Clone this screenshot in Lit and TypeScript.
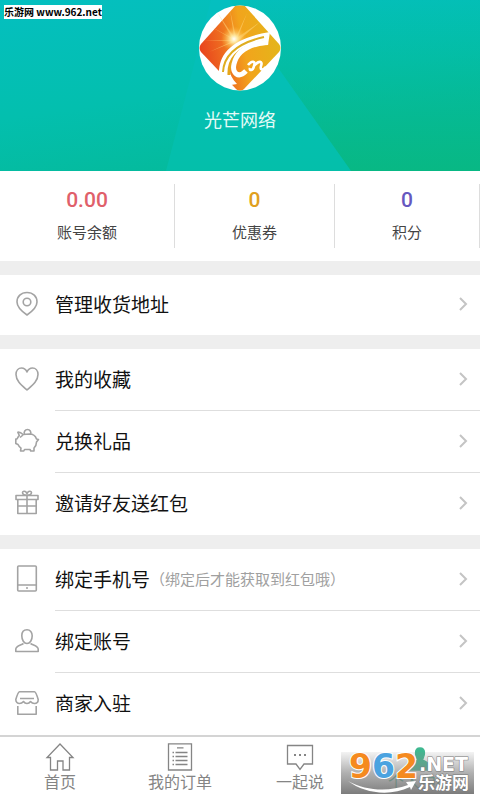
import { LitElement, html, css, svg, TemplateResult } from "lit";
import { customElement, property } from "lit/decorators.js";

const icons: Record<string, TemplateResult> = {
  pin: svg`<path d="M12 0.500C6 .500 2 4.500 2 10C2 15.500 7 19.500 12 23C17 19.500 22 15.500 22 10C22 4.500 18 .500 12 .500Z"/><circle cx="12" cy="10" r="3.800"/>`,
  heart: svg`<path d="M12 23C7 18.500 1 14 1 7.500C1 3.500 3.500 1 6.500 1C9 1 11 2.500 12 5C13 2.500 15 1 17.500 1C20.500 1 23 3.500 23 7.500C23 14 17 18.500 12 23Z"/>`,
  pig: svg`<path d="M8 5.500C6.500 4 4.500 3 2.800 3.200L4.300 6.500C3.200 7.700 2.500 9 2 10H.8V14.500L3 15.500C3.800 17.300 4.800 18.300 6 19.200L5.500 22H8.800L9.500 20.500H15L15.800 22H19V19C20.500 17.500 21.500 15.500 21.500 13L23.500 10.500L21.500 10C20.500 7 17.500 5 14.500 5Z"/><path d="M9.500 5.200A3.300 3.300 0 1 1 15.500 5.200M5 8.500L8 6"/>`,
  gift: svg`<path d="M1 4.500H23V8.500H1ZM2.800 8.500V22.500H21.200V8.500M12 4.500V22.500M2.800 15H21.200"/><path d="M12 4.200C9 4.200 7.500 3 7.500 1.500S10 -.2 11 1L12 2.500L13 1C14 -.2 16.500 0 16.500 1.500S15 4.200 12 4.200Z"/>`,
  phone: svg`<rect x="2.700" y="-1" width="18.600" height="25" rx="1"/><path d="M2.700 18H21.300M11 21H13"/>`,
  user: svg`<path d="M12 .8C8.800 .8 6.800 3.200 6.800 6.800C6.800 11 9 14.500 12 14.500S17.200 11 17.200 6.800C17.200 3.200 15.200 .8 12 .8Z"/><path d="M8.500 14.500C5 16.500 1 17 .8 20V22.500H23.200V20C23 17 19 16.500 15.500 14.500"/>`,
  shop: svg`<path d="M4.500 .8H19.500C20.800 .8 21.500 3 23.200 8.500C23.200 11 21.500 12.500 19.500 12.500C17.800 12.500 16.500 11.700 15.500 10.500C14.500 12 13.300 12.500 12 12.500S9.500 12 8.500 10.500C7.500 11.700 6.200 12.500 4.500 12.500C2.500 12.500 .8 11 .8 8.500C2.500 3 3.200 .8 4.500 .8ZM5 7.500H19"/><path d="M2.800 15V23.200H21.200V15"/>`,
  home: svg`<path d="M14 2L27 15.500H23.500V28H17V19H11.500V28H4.500V15.500H1Z"/>`,
  orders: svg`<path d="M2.500 1.800H25.500V28H2.500ZM11 5.800H17.500M9.500 10.500H21.500M9.500 14.500H21.500M9.500 18.500H21.500M9.500 22.500H21.500M6.500 10.500H8M6.500 14.500H8M6.500 18.500H8M6.500 22.500H8"/>`,
  chat: svg`<path d="M1.500 3.500H26.500V22H18L14 27.500L10 22H1.500Z"/><path d="M8 13H10M13 13H15M18 13H20" stroke-width="2"/>`,
  me: svg`<path fill="currentColor" d="M14 6C11 6 9.500 8 9.500 11C9.500 14 11 16 11.300 18C8 20 4 21 3.500 27V28H24.500V27C24 21 20 20 16.700 18C17 16 18.500 14 18.500 11C18.500 8 17 6 14 6Z"/>`,
};

@customElement("menu-row")
class MenuRow extends LitElement {
  @property() icon = "";
  @property() label = "";
  @property() hint = "";
  static styles = css`
    :host { display: block; background: #fff; }
    .row { display: flex; align-items: center; height: var(--row-height, 62px); padding-left: 15px; color: #111; text-decoration: none; }
    .icon { width: 24px; height: 24px; flex: none; margin-bottom: 2px; fill: none; stroke: #a3a3a3; stroke-width: 1.6; stroke-linejoin: round; overflow: visible; }
    .body { display: flex; align-items: center; flex: 1; align-self: stretch; margin-left: 16px; padding: 0 12px 2px 0; box-sizing: border-box; border-bottom: 1px solid var(--line, #dedede); }
    .label { font-size: 19px; line-height: 28px; white-space: nowrap; }
    .hint { font-size: 15px; line-height: 28px; color: #a0a0a0; white-space: nowrap; }
    .arrow { width: 10px; height: 16px; margin-left: auto; fill: none; stroke: #c4c4c4; stroke-width: 2; }
  `;
  render() {
    return html`<a class="row" href="#">
      <svg class="icon" viewBox="0 0 24 24" aria-hidden="true">${icons[this.icon]}</svg>
      <span class="body">
        <span class="label">${this.label}</span>
        ${this.hint ? html`<span class="hint">${this.hint}</span>` : ""}
        <svg class="arrow" viewBox="0 0 10 16" aria-hidden="true"><path d="M2 2L8 8L2 14" /></svg>
      </span>
    </a>`;
  }
}

@customElement("app-root")
class AppRoot extends LitElement {
  static styles = css`
    :host { display: flex; flex-direction: column; min-height: 100vh; position: relative; background: #eee; font-family: "Noto Sans CJK SC", sans-serif; }
    .header { position: relative; display: flex; flex-direction: column; align-items: center; box-sizing: border-box; height: 171px; padding-top: 5px; background: linear-gradient(170deg, #04bfc0 10%, #03bfae 45%, #06b888 95%); background: linear-gradient(172deg, #04bfc0, #03bfae 50%, #05b893); }
    .beam { position: absolute; inset: 0; width: 100%; height: 100%; }
    .avatar { position: relative; width: 82px; height: 86px; }
    .name { position: relative; margin: 14px 0 0; font-size: 18px; line-height: 28px; font-weight: 400; color: #e4fbf7; }
    .site { position: absolute; left: 4px; top: 5px; width: 98px; height: 14px; background: #fff; color: #000; font: bold 10px/14px "Noto Sans CJK SC", sans-serif; text-align: center; white-space: nowrap; }
    .stats { display: grid; grid-template-columns: 35fr 32fr 29fr; padding: 13px 0; background: #fff; }
    .stat { display: flex; flex-direction: column; align-items: center; height: 64px; border-right: 1px solid #ddd; text-decoration: none; }
    .value { font: 500 21px/32px Roboto, sans-serif; }
    .caption { font-size: 15px; line-height: 32px; color: #444; }
    .red { color: #e0606a; }
    .amber { color: #e0a020; }
    .violet { color: #6658c0; }
    .group { margin-top: 14px; background: #fff; }
    .single { --row-height: 60px; }
    .last { --line: transparent; }
    .tabs { display: grid; grid-template-columns: repeat(4, 1fr); margin-top: auto; background: #fff; border-top: 2px solid #d4d4d4; height: 63px; }
    .tab { display: flex; flex-direction: column; align-items: center; padding-top: 5px; color: #858585; text-decoration: none; font-size: 16px; line-height: 22px; }
    .tab svg { width: 28px; height: 28px; fill: none; stroke: currentColor; stroke-width: 1.3; overflow: visible; }
    .active { color: #3fb890; }
    .mark { position: absolute; right: 6px; bottom: 6px; width: 133px; height: 42px; }
    .digits { font: bold 33px "DejaVu Sans", sans-serif; stroke: #fff; stroke-width: 2; paint-order: stroke; }
    .net { font: bold 19px "DejaVu Sans", sans-serif; fill: #fff; stroke: #777; stroke-width: 1; paint-order: stroke; }
    .cn { font: bold 17px "Noto Sans CJK SC", sans-serif; fill: #fff; stroke: #777; stroke-width: 1; paint-order: stroke; }
  `;

  tab(icon: string, label: string, active = false) {
    return html`<a class="tab ${active ? "active" : ""}" href="#"><svg viewBox="0 0 28 28" aria-hidden="true">${icons[icon]}</svg><span>${label}</span></a>`;
  }

  stat(value: string, caption: string, tone: string) {
    return html`<a class="stat" href="#"><span class="value ${tone}">${value}</span><span class="caption">${caption}</span></a>`;
  }

  render() {
    return html`
      <header class="header">
        <svg class="beam" viewBox="0 0 480 171" preserveAspectRatio="none" aria-hidden="true">
          <defs>
            <linearGradient id="beam" x2="0" y2="1"><stop stop-color="#04bfc0" /><stop offset="1" stop-color="#04bfaa" /></linearGradient>
            <linearGradient id="side" x2="0" y2="1"><stop stop-color="#04bb9c" stop-opacity="0" /><stop offset="1" stop-color="#08b884" /></linearGradient>
          </defs>
          <path d="M230 0H480V171H351Z" fill="url(#side)" />
          <path d="M211 0H230L351 171H166Z" fill="url(#beam)" />
        </svg>
        <svg class="avatar" viewBox="0 0 82 86" role="img" aria-label="光芒网络">
          <defs>
            <clipPath id="round"><ellipse cx="41" cy="43" rx="41" ry="42.5" /></clipPath>
            <linearGradient id="gold" x1="0" y1="0.6" x2="1" y2="0.4"><stop stop-color="#e8401c" /><stop offset=".28" stop-color="#ee6a20" /><stop offset=".55" stop-color="#f2a41c" /><stop offset="1" stop-color="#e3b61a" /></linearGradient>
            <radialGradient id="glow"><stop stop-color="#fff" /><stop offset=".3" stop-color="#ffe9a0" stop-opacity=".9" /><stop offset="1" stop-color="#ffb030" stop-opacity="0" /></radialGradient>
          </defs>
          <g clip-path="url(#round)">
            <rect width="82" height="86" fill="#fff" />
            <path d="M37 0Q41 -3 45 0L80 39Q83 43 80 47L45 84Q41 88 37 84L2 47Q-1 43 2 39Z" fill="url(#gold)" />
            <path d="M35 35L9 20L33 33L18 7L35 32L31 5L37 32L48 8L39 32L61 17L40 35L10 47L34 36L2 36Z" fill="#ffdb83" opacity=".5" />
            <circle cx="35" cy="34" r="13" fill="url(#glow)" />
            <path d="M20 68C20 48 34 33 71 27L69 40C50 41 36 46 32 58C29 65 31 72 38 79L32 80Z" fill="#fff" />
            <path d="M24 67C25 49 39 38 65 32" fill="none" stroke="#dfad20" stroke-width="2" />
            <path d="M30 70C29 51 44 41 65 37" fill="none" stroke="#e5a51a" stroke-width="3" />
            <path d="M69 37C50 39 38 46 35 59C33 68 39 74 47 66" fill="none" stroke="#fff" stroke-width="5" />
            <path d="M49 60C53 55 57 56 55 61C54 66 50 66 51 63M55 61C60 55 64 56 62 61C61 65 63 66 67 62" fill="none" stroke="#fff" stroke-width="2.600" />
          </g>
        </svg>
        <h1 class="name">光芒网络</h1>
        <div class="site">乐游网 www.962.net</div>
      </header>
      <section class="stats">
        ${this.stat("0.00", "账号余额", "red")}
        ${this.stat("0", "优惠券", "amber")}
        ${this.stat("0", "积分", "violet")}
      </section>
      <section class="group single">
        <menu-row class="last" icon="pin" label="管理收货地址"></menu-row>
      </section>
      <section class="group">
        <menu-row icon="heart" label="我的收藏"></menu-row>
        <menu-row icon="pig" label="兑换礼品"></menu-row>
        <menu-row class="last" icon="gift" label="邀请好友送红包"></menu-row>
      </section>
      <section class="group">
        <menu-row icon="phone" label="绑定手机号" hint="（绑定后才能获取到红包哦）"></menu-row>
        <menu-row icon="user" label="绑定账号"></menu-row>
        <menu-row class="last" icon="shop" label="商家入驻"></menu-row>
      </section>
      <nav class="tabs">
        ${this.tab("home", "首页")} ${this.tab("orders", "我的订单")} ${this.tab("chat", "一起说")} ${this.tab("me", "个人中心", true)}
      </nav>
      <svg class="mark" viewBox="0 0 133 42" role="img" aria-label="962.NET 乐游网">
        <defs><linearGradient id="shade" x2="0" y2="1"><stop stop-color="#888" stop-opacity=".1" /><stop offset=".5" stop-color="#858585" stop-opacity=".65" /><stop offset="1" stop-color="#757575" stop-opacity=".95" /></linearGradient></defs>
        <rect width="133" height="42" fill="url(#shade)" />
        <text class="digits" x="8" y="26"><tspan fill="#f58a1f">9</tspan><tspan fill="#4ba3e0">6</tspan><tspan fill="#f58a1f">2</tspan></text>
        <path d="M7 29C25 39 48 40 67 33L65 30L75 29L70 38L69 35C48 45 23 41 7 29Z" fill="#fff" />
        <text class="net" x="78" y="19">.NET</text>
        <text class="cn" x="77" y="37">乐游网</text>
      </svg>
    `;
  }
}
